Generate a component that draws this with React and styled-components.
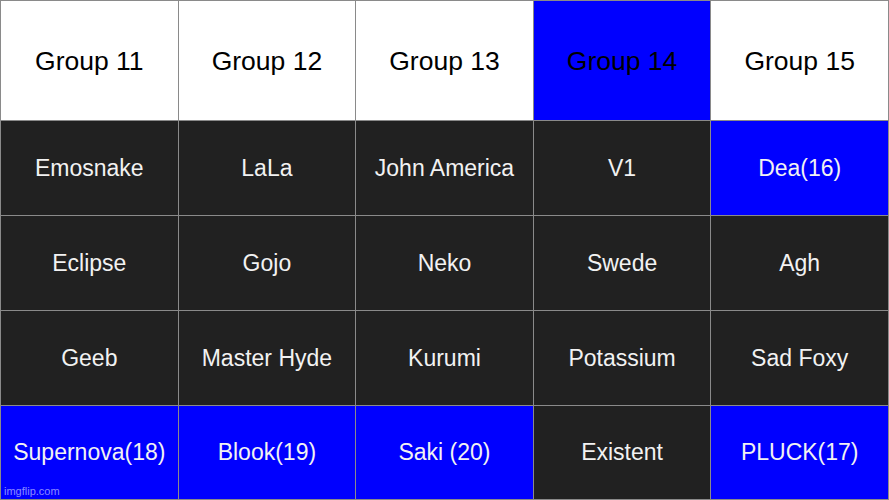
import React from "react";
import styled, { createGlobalStyle } from "styled-components";

const Global = createGlobalStyle`
  html, body { margin: 0; padding: 0; background: #fff; }
  body { font-family: "Liberation Sans", Arial, sans-serif; }
`;

const Board = styled.div`
  position: relative;
  width: 889px;
  height: 500px;
  box-sizing: border-box;
  padding: 1px;
  background: #8a8a8a;
  display: grid;
  grid-template-columns: repeat(5, 1fr);
  grid-template-rows: 119px 94px 94px 94px 1fr;
  gap: 1px;
`;

const Cell = styled.div`
  display: flex;
  align-items: center;
  justify-content: center;
  text-align: center;
  white-space: nowrap;
  padding-top: ${(p) => (p.head ? "2px" : "0")};
  background: ${(p) => (p.hot ? "#0000ff" : p.head ? "#ffffff" : "#212121")};
  color: ${(p) => (p.head ? "#000" : "#f2f2f2")};
  font-size: ${(p) => (p.head ? "26.5px" : "23px")};
`;

const Mark = styled.span`
  position: absolute;
  left: 4px;
  bottom: 3px;
  font-size: 11px;
  color: rgba(255, 255, 255, 0.55);
`;

const headers = [
  ["Group 11"],
  ["Group 12"],
  ["Group 13"],
  ["Group 14", true],
  ["Group 15"],
];

const rows = [
  [["Emosnake"], ["LaLa"], ["John America"], ["V1"], ["Dea(16)", true]],
  [["Eclipse"], ["Gojo"], ["Neko"], ["Swede"], ["Agh"]],
  [["Geeb"], ["Master Hyde"], ["Kurumi"], ["Potassium"], ["Sad Foxy"]],
  [
    ["Supernova(18)", true],
    ["Blook(19)", true],
    ["Saki (20)", true],
    ["Existent"],
    ["PLUCK(17)", true],
  ],
];

export default function App() {
  return (
    <>
      <Global />
      <Board>
        {headers.map(([name, hot]) => (
          <Cell head hot={hot} key={name}>{name}</Cell>
        ))}
        {rows.map((row, r) =>
          row.map(([name, hot]) => (
            <Cell hot={hot} key={`${r}-${name}`}>{name}</Cell>
          ))
        )}
        <Mark>imgflip.com</Mark>
      </Board>
    </>
  );
}
